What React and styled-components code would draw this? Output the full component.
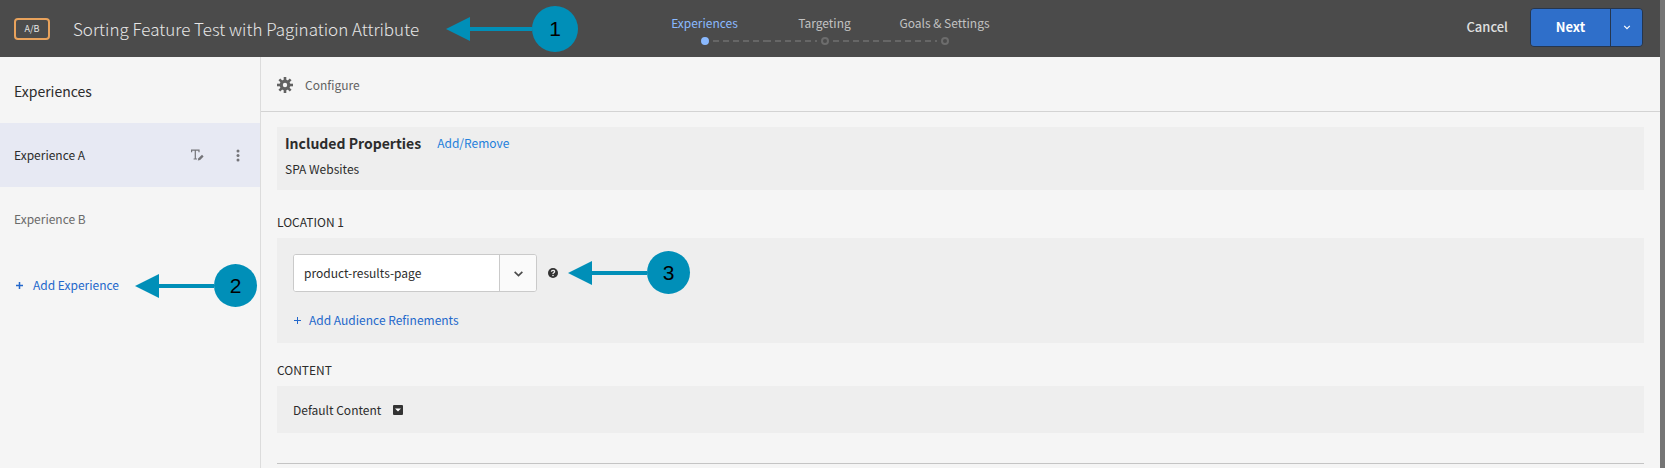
import React from "react";
import styled, { createGlobalStyle } from "styled-components";

const Global = createGlobalStyle`
  *, *::before, *::after { box-sizing: border-box; }
  body {
    margin: 0;
    background: #f5f5f5;
    color: #2c2c2c;
    font: 12px/20px "Noto Sans CJK SC", "Noto Sans", sans-serif;
  }
  button, input { font: inherit; color: inherit; }
  button { border: 0; padding: 0; background: none; cursor: pointer; }
  a { text-decoration: none; }
  h1, h2, h3, p, ul, ol { margin: 0; padding: 0; font-weight: 400; }
  ul, ol { list-style: none; }
  svg { display: block; flex: none; }
`;

const Frame = styled.div`
  min-height: 100vh;
  display: flex;
  flex-direction: column;
  border-right: 5px solid #757575;
`;

const Header = styled.header`
  position: relative;
  display: grid;
  grid-template-columns: 1fr auto 1fr;
  align-items: center;
  height: 57px;
  padding: 0 17px 0 14px;
  background: #4b4b4b;
`;

const TitleGroup = styled.div`
  display: flex;
  align-items: center;
  gap: 23px;
`;

const TypeBadge = styled.span`
  width: 36px;
  height: 22px;
  border: 2px solid #e8a25c;
  border-radius: 4px;
  color: #e6e6e6;
  font-size: 9px;
  line-height: 18px;
  text-align: center;
`;

const Title = styled.h1`
  color: #e6e6e6;
  font-size: 17px;
  font-weight: 300;
  line-height: 28px;
  white-space: nowrap;
`;

const Steps = styled.ol`
  display: grid;
  grid-template-columns: repeat(3, 120px);
  padding-right: 8px;
`;

const Step = styled.li`
  display: flex;
  flex-direction: column;
  align-items: center;
  gap: 4px;
  color: ${(p) => (p.$active ? "#8ab9ff" : "#c2c2c2")};
  white-space: nowrap;
`;

const Track = styled.span`
  display: grid;
  grid-template-columns: 1fr 8px 1fr;
  align-items: center;
  gap: 4px;
  width: 100%;
`;

const Dash = styled.span`
  height: 2px;
  background: ${(p) =>
    p.$on
      ? "repeating-linear-gradient(90deg, #666 0 6px, transparent 6px 10px)"
      : "none"};
`;

const Dot = styled.span`
  width: 8px;
  height: 8px;
  border-radius: 50%;
  border: 2px solid ${(p) => (p.$active ? "#8ab9ff" : "#6c6c6c")};
  background: ${(p) => (p.$active ? "#8ab9ff" : "transparent")};
`;

const Actions = styled.div`
  display: flex;
  justify-content: flex-end;
  align-items: center;
  gap: 22px;
  padding-bottom: 3px;
`;

const CancelButton = styled.button`
  color: #e0e0e0;
  font-size: 13px;
  font-weight: 500;
`;

const SplitButton = styled.div`
  display: flex;
  height: 39px;
  border: 1px solid #25364f;
  border-radius: 4px;
  overflow: hidden;
`;

const PrimaryButton = styled.button`
  display: grid;
  place-items: center;
  width: ${(p) => (p.$narrow ? "32px" : "79px")};
  background: #2f6fca;
  color: #fff;
  font-size: 13px;
  font-weight: 700;

  & + & { border-left: 1px solid #25364f; }
`;

const Body = styled.div`
  flex: 1;
  display: flex;
`;

const Sidebar = styled.nav`
  position: relative;
  flex: none;
  width: 261px;
  border-right: 1px solid #dcdcdc;
`;

const SidebarTitle = styled.h2`
  padding: 22px 14px 20px;
  font-size: 14px;
  line-height: 24px;
`;

const ExperienceRow = styled.li`
  display: flex;
  align-items: center;
  gap: 27px;
  height: 64px;
  padding: 0 15px 0 14px;
  background: ${(p) => (p.$selected ? "#e7e9f3" : "transparent")};
  color: ${(p) => (p.$selected ? "#2c2c2c" : "#6a6a6a")};
`;

const RowName = styled.span`
  flex: 1;
`;

const IconButton = styled.button`
  display: grid;
  place-items: center;
  min-width: ${(p) => (p.$muted ? "14px" : "10px")};
  height: 20px;
  color: ${(p) => (p.$muted ? "#747478" : "#333")};
`;

const AddButton = styled.button`
  display: flex;
  align-items: center;
  gap: ${(p) => (p.$wide ? "9px" : "7px")};
  padding: ${(p) => (p.$wide ? "24px 15px" : "0")};
  color: #2468cb;
`;

const Main = styled.main`
  flex: 1;
  min-width: 0;
`;

const Toolbar = styled.div`
  display: flex;
  align-items: center;
  height: 55px;
  padding: 2px 16px 0;
  border-bottom: 1px solid #d3d3d3;
`;

const ConfigureButton = styled.button`
  display: flex;
  align-items: center;
  gap: 12px;
  color: #626262;
`;

const Content = styled.div`
  padding: 15px 16px 0;
`;

const Panel = styled.section`
  position: relative;
  padding: ${(p) => p.$pad};
  background: #eeeeee;
`;

const PanelHeading = styled.div`
  display: flex;
  align-items: center;
  gap: 16px;
  margin-bottom: 4px;
`;

const PropertiesTitle = styled.h2`
  font-size: 14px;
  line-height: 24px;
  font-weight: 700;
`;

const Link = styled.a`
  color: #2480db;
`;

const SectionLabel = styled.h3`
  padding: ${(p) => (p.$first ? "22px" : "17px")} 0 6px;
  font-size: 12px;
  line-height: 20px;
`;

const FieldRow = styled.div`
  display: flex;
  align-items: center;
  gap: 11px;
  margin-bottom: 18px;
`;

const Combo = styled.div`
  display: flex;
  width: 244px;
  height: 38px;
  border: 1px solid #cacaca;
  border-radius: 3px;
  background: #fff;
  overflow: hidden;
`;

const ComboInput = styled.input`
  flex: 1;
  min-width: 0;
  padding: 0 10px;
  border: 0;
  outline: 0;
  background: #fff;
`;

const ComboToggle = styled.button`
  display: grid;
  place-items: center;
  width: 37px;
  border-left: 1px solid #cacaca;
  background: #fafafa;
  color: #4b4b4b;
`;

const DefaultContent = styled.div`
  display: flex;
  align-items: center;
  gap: 12px;
`;

const Divider = styled.hr`
  margin: 30px 0 0;
  border: 0;
  border-top: 1px solid #c4c4c4;
`;

const Callout = styled.div`
  position: absolute;
  top: ${(p) => p.$top}px;
  left: ${(p) => p.$left}px;
  z-index: 1;
  display: flex;
  align-items: center;
  color: #008fb8;
`;

const CalloutNumber = styled.span`
  width: ${(p) => p.$size}px;
  height: ${(p) => p.$size}px;
  border-radius: 50%;
  background: #008fb8;
  color: #000;
  font-family: "Liberation Sans", sans-serif;
  font-size: 21px;
  line-height: ${(p) => p.$size}px;
  text-align: center;
`;

function Pointer({ n, top, left, length = 79, size = 43 }) {
  return (
    <Callout $top={top} $left={left}>
      <svg width={length} height="24" aria-hidden="true">
        <path d="M0 12L24 0V24Z" fill="currentColor" />
        <path d={`M20 12H${length}`} stroke="currentColor" strokeWidth="4" />
      </svg>
      <CalloutNumber $size={size}>{n}</CalloutNumber>
    </Callout>
  );
}

function Chevron({ size }) {
  return (
    <svg width={size} height={size} viewBox="0 0 10 10" fill="none" aria-hidden="true">
      <path d="M1.5 3.5L5 7l3.5-3.5" stroke="currentColor" strokeWidth="1.5" />
    </svg>
  );
}

function Plus({ weight }) {
  return (
    <svg width="9" height="9" viewBox="0 0 9 9" aria-hidden="true">
      <path d="M4.5 1V8M1 4.5H8" stroke="currentColor" strokeWidth={weight} />
    </svg>
  );
}

function Gear() {
  return (
    <svg width="16" height="16" viewBox="-8 -8 16 16" aria-hidden="true">
      {[0, 45, 90, 135].map((a) => (
        <rect key={a} x="-1.3" y="-8" width="2.6" height="16" fill="currentColor" transform={`rotate(${a})`} />
      ))}
      <circle r="5.4" fill="currentColor" />
      <circle r="2.2" fill="#f5f5f5" />
    </svg>
  );
}

function TextEdit() {
  return (
    <svg width="13" height="12" viewBox="0 0 13 12" aria-hidden="true">
      <path d="M.6 3.200V1.100H8V3.200M4.300 1.100V10M2.600 10H6" fill="none" stroke="currentColor" strokeWidth="1.2" />
      <path d="M6.800 11.600L7.400 9.300L11 5.800L12.600 7.400L9.100 11Z" fill="currentColor" />
    </svg>
  );
}

function Dots() {
  return (
    <svg width="4" height="13" viewBox="0 0 4 13" fill="currentColor" aria-hidden="true">
      <circle cx="2" cy="2" r="1.5" />
      <circle cx="2" cy="6.500" r="1.5" />
      <circle cx="2" cy="11" r="1.5" />
    </svg>
  );
}

function Help() {
  return (
    <svg width="10" height="10" viewBox="0 0 10 10" aria-hidden="true">
      <circle cx="5" cy="5" r="5" fill="currentColor" />
      <path d="M3.400 3.800C3.400 1.800 6.600 1.800 6.600 3.700C6.600 4.800 5 4.800 5 6" fill="none" stroke="#eee" strokeWidth="1.300" />
      <circle cx="5" cy="7.500" r=".8" fill="#eee" />
    </svg>
  );
}

function BoxedArrow() {
  return (
    <svg width="10" height="10" viewBox="0 0 10 10" aria-hidden="true">
      <rect width="10" height="10" rx="1" fill="currentColor" />
      <path d="M2 3.500H8L5 6.500Z" fill="#fff" />
    </svg>
  );
}

const steps = ["Experiences", "Targeting", "Goals & Settings"];

export default function App() {
  return (
    <Frame>
      <Global />
      <Header>
        <TitleGroup>
          <TypeBadge>A/B</TypeBadge>
          <Title>Sorting Feature Test with Pagination Attribute</Title>
        </TitleGroup>
        <Steps>
          {steps.map((label, i) => (
            <Step key={label} $active={i === 0} aria-current={i === 0 ? "step" : undefined}>
              {label}
              <Track>
                <Dash $on={i > 0} />
                <Dot $active={i === 0} />
                <Dash $on={i < steps.length - 1} />
              </Track>
            </Step>
          ))}
        </Steps>
        <Actions>
          <CancelButton type="button">Cancel</CancelButton>
          <SplitButton>
            <PrimaryButton type="button">Next</PrimaryButton>
            <PrimaryButton type="button" $narrow aria-label="More save options">
              <Chevron size={8} />
            </PrimaryButton>
          </SplitButton>
        </Actions>
        <Pointer n="1" top={6} left={446} length={86} size={46} />
      </Header>
      <Body>
        <Sidebar>
          <SidebarTitle>Experiences</SidebarTitle>
          <ul>
            <ExperienceRow $selected>
              <RowName>Experience A</RowName>
              <IconButton type="button" $muted aria-label="Rename experience">
                <TextEdit />
              </IconButton>
              <IconButton type="button" $muted aria-label="Experience options">
                <Dots />
              </IconButton>
            </ExperienceRow>
            <ExperienceRow>
              <RowName>Experience B</RowName>
            </ExperienceRow>
          </ul>
          <AddButton type="button" $wide>
            <Plus weight={1.5} />
            Add Experience
          </AddButton>
          <Pointer n="2" top={207} left={135} />
        </Sidebar>
        <Main>
          <Toolbar>
            <ConfigureButton type="button">
              <Gear />
              Configure
            </ConfigureButton>
          </Toolbar>
          <Content>
            <Panel $pad="4px 8px 11px">
              <PanelHeading>
                <PropertiesTitle>Included Properties</PropertiesTitle>
                <Link href="#properties">Add/Remove</Link>
              </PanelHeading>
              <p>SPA Websites</p>
            </Panel>
            <SectionLabel $first>LOCATION 1</SectionLabel>
            <Panel $pad="16px 16px 13px">
              <FieldRow>
                <Combo>
                  <ComboInput aria-label="Location" defaultValue="product-results-page" />
                  <ComboToggle type="button" aria-label="Show locations">
                    <Chevron size={11} />
                  </ComboToggle>
                </Combo>
                <IconButton type="button" aria-label="Help">
                  <Help />
                </IconButton>
              </FieldRow>
              <AddButton type="button">
                <Plus weight={1} />
                Add Audience Refinements
              </AddButton>
              <Pointer n="3" top={13} left={291} />
            </Panel>
            <SectionLabel>CONTENT</SectionLabel>
            <Panel $pad="14px 16px 13px">
              <DefaultContent>
                Default Content
                <IconButton type="button" aria-label="Change content">
                  <BoxedArrow />
                </IconButton>
              </DefaultContent>
            </Panel>
            <Divider />
          </Content>
        </Main>
      </Body>
    </Frame>
  );
}
